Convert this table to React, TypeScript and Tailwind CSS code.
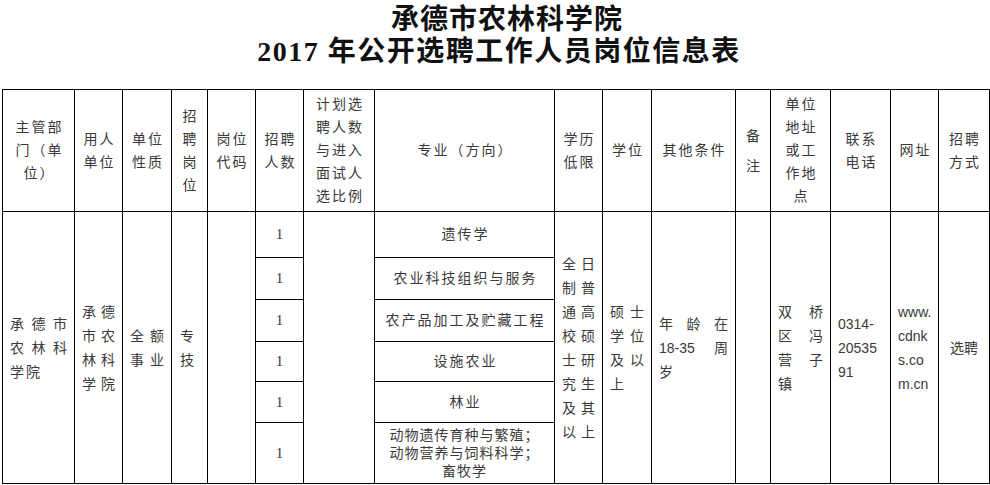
import React from 'react'

// 表头：每个单元格的分行文字
const headers: { lines: string[]; leading?: string }[] = [
  { lines: ['主管部', '门（单', '位）'] },
  { lines: ['用人', '单位'] },
  { lines: ['单位', '性质'] },
  { lines: ['招', '聘', '岗', '位'] },
  { lines: ['岗位', '代码'] },
  { lines: ['招聘', '人数'] },
  { lines: ['计划选', '聘人数', '与进入', '面试人', '选比例'] },
  { lines: ['专业（方向）'] },
  { lines: ['学历', '低限'] },
  { lines: ['学位'] },
  { lines: ['其他条件'] },
  { lines: ['备', '注'], leading: 'leading-[30px]' },
  { lines: ['单位', '地址', '或工', '作地', '点'] },
  { lines: ['联系', '电话'] },
  { lines: ['网址'] },
  { lines: ['招聘', '方式'] },
]

const colClasses = [
  'w-[72px]', 'w-[48px]', 'w-[49px]', 'w-[36px]', 'w-[48px]', 'w-[48px]', 'w-[71px]', 'w-[180px]',
  'w-[48px]', 'w-[49px]', 'w-[84px]', 'w-[35px]', 'w-[60px]', 'w-[60px]', 'w-[48px]', 'w-[51px]',
]

const majors = [
  { h: 'h-[46px]', lines: ['遗传学'] },
  { h: 'h-[42px]', lines: ['农业科技组织与服务'] },
  { h: 'h-[42px]', lines: ['农产品加工及贮藏工程'] },
  { h: 'h-[40px]', lines: ['设施农业'] },
  { h: 'h-[41px]', lines: ['林业'] },
  { h: 'h-[61px]', lines: ['动物遗传育种与繁殖；', '动物营养与饲料科学；', '畜牧学'] },
]

const cell = 'border border-black p-0 align-middle'

// 两端对齐的一行
function JLine({ parts }: { parts: string[] }) {
  return (
    <div className="flex justify-between">
      {parts.map((p, i) => (
        <span key={i}>{p}</span>
      ))}
    </div>
  )
}

function Justified({ rows, last, pad = 'px-[7px]' }: { rows: string[][]; last?: string; pad?: string }) {
  return (
    <div className={`${pad} leading-[24px]`}>
      {rows.map((r, i) => (
        <JLine key={i} parts={r} />
      ))}
      {last && <div className="tracking-[2px]">{last}</div>}
    </div>
  )
}

export default function App() {
  return (
    <div className="w-[990px] h-[485px] bg-white overflow-hidden text-[#3a3a3a] font-['Liberation_Sans','Noto_Sans_CJK_SC',sans-serif]">
      {/* 标题 */}
      <div className="h-[89px] pt-[4px] flex flex-col items-center text-[#111] font-semibold font-['Liberation_Serif','Noto_Sans_CJK_SC',serif] text-[28px] leading-[32px]">
        <div className="tracking-[1px] pl-[24px]">承德市农林科学院</div>
        <div className="tracking-[1.5px] pl-[8px]">2017 年公开选聘工作人员岗位信息表</div>
      </div>

      <table className="ml-[2px] w-[987px] table-fixed border-collapse text-[14px]">
        <colgroup>
          {colClasses.map((c, i) => (
            <col key={i} className={c} />
          ))}
        </colgroup>
        <tbody>
          <tr className="h-[122px]">
            {headers.map((h, i) => (
              <td key={i} className={`${cell} text-center`}>
                <div className={`${h.leading ?? 'leading-[23px]'} tracking-[2px] pl-[2px]`}>
                  {h.lines.map((l, j) => (
                    <div key={j}>{l}</div>
                  ))}
                </div>
              </td>
            ))}
          </tr>

          {majors.map((m, i) => (
            <tr key={i} className={m.h}>
              {i === 0 && (
                <>
                  <td rowSpan={6} className={cell}>
                    <Justified rows={[['承', '德', '市'], ['农', '林', '科']]} last="学院" />
                  </td>
                  <td rowSpan={6} className={cell}>
                    <Justified rows={[['承', '德'], ['市', '农'], ['林', '科'], ['学', '院']]} />
                  </td>
                  <td rowSpan={6} className={cell}>
                    <Justified rows={[['全', '额'], ['事', '业']]} />
                  </td>
                  <td rowSpan={6} className={cell}>
                    <div className="pl-[8px] leading-[24px]">
                      <div>专</div>
                      <div>技</div>
                    </div>
                  </td>
                  <td rowSpan={6} className={cell}></td>
                </>
              )}

              <td className={`${cell} text-center font-['Liberation_Serif',serif] text-[15px]`}>1</td>

              {i === 0 && <td rowSpan={6} className={cell}></td>}

              <td className={`${cell} text-center`}>
                {m.lines.length > 1 ? (
                  <div className="leading-[18px] tracking-[1px]">
                    {m.lines.map((l, j) => (
                      <div key={j}>{l}</div>
                    ))}
                  </div>
                ) : (
                  <div className="tracking-[2px] pl-[2px]">{m.lines[0]}</div>
                )}
              </td>

              {i === 0 && (
                <>
                  <td rowSpan={6} className={cell}>
                    <Justified
                      rows={[['全', '日'], ['制', '普'], ['通', '高'], ['校', '硕'], ['士', '研'], ['究', '生'], ['及', '其'], ['以', '上']]}
                    />
                  </td>
                  <td rowSpan={6} className={cell}>
                    <Justified rows={[['硕', '士'], ['学', '位'], ['及', '以']]} last="上" />
                  </td>
                  <td rowSpan={6} className={cell}>
                    <Justified rows={[['年', '龄', '在'], ['18-35', '周']]} last="岁" />
                  </td>
                  <td rowSpan={6} className={cell}></td>
                  <td rowSpan={6} className={cell}>
                    <Justified rows={[['双', '桥'], ['区', '冯'], ['营', '子']]} last="镇" />
                  </td>
                  <td rowSpan={6} className={cell}>
                    <div className="pl-[7px] leading-[24px]">
                      <div>0314-</div>
                      <div>20535</div>
                      <div>91</div>
                    </div>
                  </td>
                  <td rowSpan={6} className={cell}>
                    <div className="pl-[7px] leading-[24px]">
                      <div>www.</div>
                      <div>cdnk</div>
                      <div>s.co</div>
                      <div>m.cn</div>
                    </div>
                  </td>
                  <td rowSpan={6} className={`${cell} text-center`}>
                    <div className="leading-[24px]">选聘</div>
                  </td>
                </>
              )}
            </tr>
          ))}
        </tbody>
      </table>
    </div>
  )
}
